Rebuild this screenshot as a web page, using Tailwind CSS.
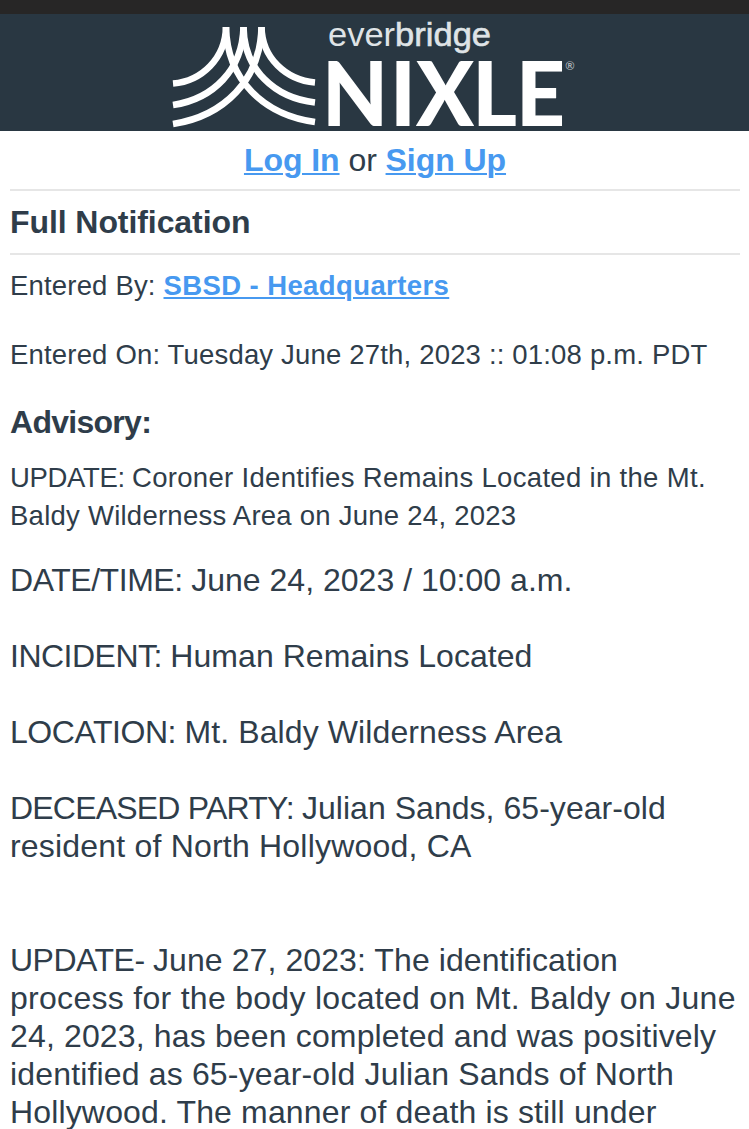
<!DOCTYPE html>
<html lang="en">
<head>
    <meta charset="UTF-8">
    <meta name="viewport" content="width=device-width, initial-scale=1.0">
    <title>Nixle - Full Notification</title>
    <script src="https://cdn.jsdelivr.net/npm/@tailwindcss/browser@4"></script>
</head>
<body class="bg-white h-[1129px] overflow-hidden text-[#2f3d4a] font-['Liberation_Sans',Arial,sans-serif] text-[32px] leading-[38px]">
    <div class="h-[14px] bg-[#272626]"></div>
    <header class="h-[117px] bg-[#293742] flex">
        <svg class="w-full h-full" viewBox="0 14 749 117" fill="none">
            <!-- bridge mark -->
            <g stroke="#fff" stroke-width="6.6">
                <path d="M226 27C225.500 58 202 81 173 83.500" />
                <path d="M243.500 27C242.500 70 213 99 173 105" />
                <path d="M261.500 27C260.500 80 224 116 173 124" />
                <path d="M226 27C227 80 264 115 315 122" />
                <path d="M243.500 27C244 70 275 98 315 102.500" />
                <path d="M261.500 27C262 58 286 80 315 82.500" />
            </g>
            <text x="328" y="46" font-family="Liberation Sans" font-size="33" fill="#dfe3e6" textLength="163" lengthAdjust="spacingAndGlyphs">ever<tspan stroke="#dfe3e6" stroke-width=".6">bridge</tspan></text>
            <text x="322" y="126" dx="0 2 0 -2 -1" font-family="Lato" font-weight="900" font-size="90" fill="#fff" textLength="243" lengthAdjust="spacingAndGlyphs">NIXLE</text>
            <text x="565.500" y="70" font-family="Liberation Sans" font-weight="bold" font-size="12" fill="#a9b1b7">®</text>
        </svg>
    </header>
    <main class="pl-[10px] pr-[9px]">
        <div class="h-[60px] pt-[10px] text-center border-b-2 border-[#e6e6e6] tracking-[-0.06px]">
            <a href="#" class="font-bold text-[#4799f0] underline decoration-2 underline-offset-2">Log In</a> or
            <a href="#" class="font-bold text-[#4799f0] underline decoration-2 underline-offset-2">Sign Up</a>
        </div>
        <h1 class="h-[64px] pt-3 font-bold border-b-2 border-[#e6e6e6] tracking-[-0.08px]">Full Notification</h1>
        <div class="pt-3 text-[27.5px] tracking-[0.18px]">
            <p>Entered By: <a href="#" class="font-bold text-[#4799f0] underline decoration-2 underline-offset-2 tracking-[0.4px]">SBSD - Headquarters</a></p>
            <p class="mt-[31px]">Entered On: Tuesday June 27th, 2023 :: 01:08 p.m. PDT</p>
        </div>
        <h2 class="mt-[29px] font-bold tracking-[-0.72px]">Advisory:</h2>
        <p class="mt-[18px] text-[27.5px] whitespace-nowrap">
            <span class="tracking-[-0.35px]">UPDATE: </span><span class="tracking-[0.32px]">Coroner Identifies Remains Located in the Mt.</span><br>
            <span class="tracking-[0.25px]">Baldy Wilderness Area on June 24, 2023</span>
        </p>
        <div class="mt-[26px] flex flex-col gap-[38px] whitespace-nowrap">
            <p><span class="tracking-[-0.45px]">DATE/TIME: </span><span class="tracking-[0.02px]">June 24, 2023 / 10:00 a.m.</span></p>
            <p><span class="tracking-[-0.5px]">INCIDENT: </span><span class="tracking-[0.05px]">Human Remains Located</span></p>
            <p><span class="tracking-[-0.45px]">LOCATION: </span><span class="tracking-[0.1px]">Mt. Baldy Wilderness Area</span></p>
            <p>
                <span class="tracking-[-0.8px]">DECEASED PARTY: </span><span class="tracking-[0.04px]">Julian Sands, 65-year-old</span><br>
                <span class="tracking-[0.2px]">resident of North Hollywood, CA</span>
            </p>
            <p class="mt-[38px]">
                <span class="tracking-[-0.5px]">UPDATE- </span><span class="tracking-[0.09px]">June 27, 2023: The identification</span><br>
                <span class="tracking-[0.29px]">process for the body located on Mt. Baldy on June</span><br>
                <span class="tracking-[0.15px]">24, 2023, has been completed and was positively</span><br>
                <span class="tracking-[0.16px]">identified as 65-year-old Julian Sands of North</span><br>
                <span class="tracking-[0.15px]">Hollywood. The manner of death is still under</span>
            </p>
        </div>
    </main>
</body>
</html>
